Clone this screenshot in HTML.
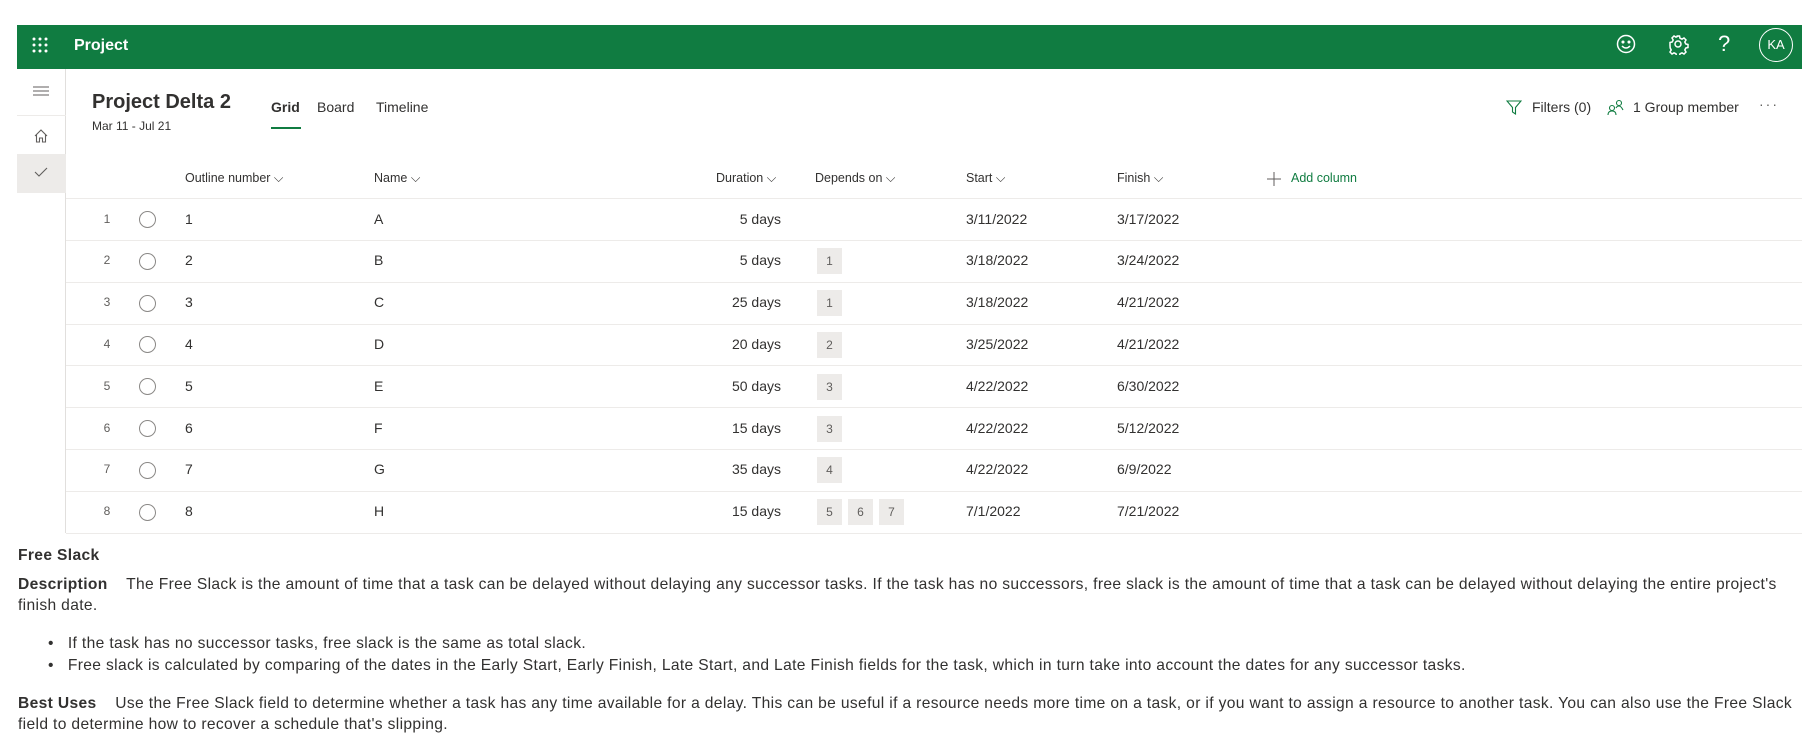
<!DOCTYPE html>
<html><head><meta charset="utf-8"><style>
*{margin:0;padding:0;box-sizing:border-box}
body{width:1809px;height:728px;overflow:hidden;background:#fff;font-family:"Liberation Sans",sans-serif;color:#323130;position:relative}
.a{position:absolute;white-space:nowrap}
.top{left:17px;top:25px;width:1785px;height:44px;background:#107c41}
.side{left:17px;top:69px;width:49px;height:464px;border-right:1px solid #e1dfdd}
.hd{font-size:12.5px;color:#323130;top:171px}
.cell{font-size:14px;color:#323130}
.rowline{left:66px;width:1736px;height:1px;background:#edebe9}
.badge{position:absolute;width:25px;height:26px;background:#edebe9;font-size:12px;color:#605e5c;text-align:center;line-height:26px}
.circ{position:absolute;width:17px;height:17px;border:1.3px solid #8a8886;border-radius:50%}
.txt{font-size:15.6px;color:#323130;left:18px;letter-spacing:0.35px}
</style></head><body>
<div class="a top"></div>
<svg class="a" style="left:32px;top:37px" width="16" height="16" viewBox="0 0 16 16" fill="#fff"><circle cx="2" cy="2" r="1.5"/><circle cx="8" cy="2" r="1.5"/><circle cx="14" cy="2" r="1.5"/><circle cx="2" cy="8" r="1.5"/><circle cx="8" cy="8" r="1.5"/><circle cx="14" cy="8" r="1.5"/><circle cx="2" cy="14" r="1.5"/><circle cx="8" cy="14" r="1.5"/><circle cx="14" cy="14" r="1.5"/></svg>
<div class="a" style="left:74px;top:37px;font-size:16px;font-weight:bold;color:#fff">Project</div>
<svg class="a" style="left:1615px;top:33px" width="22" height="22" viewBox="0 0 22 22" fill="none" stroke="#fff" stroke-width="1.5"><circle cx="11" cy="11" r="8.5"/><circle cx="8" cy="9" r=".8" fill="#fff"/><circle cx="14" cy="9" r=".8" fill="#fff"/><path d="M7 13q4 4 8 0"/></svg>
<svg class="a" style="left:1667px;top:33px" width="22" height="22" viewBox="0 0 22 22" fill="none" stroke="#fff" stroke-width="1.5"><circle cx="11" cy="11" r="3"/><path d="M9.5 3h3l.5 2.2 2 1 2-1.2 2 2-1.2 2 1 2 2.2.5v3l-2.2.5-1 2 1.2 2-2 2-2-1.2-2 1-.5 2.2h-3l-.5-2.2-2-1-2 1.2-2-2 1.2-2-1-2L3 12.5v-3l2.2-.5 1-2-1.2-2 2-2 2 1.2 2-1z"/></svg>
<div class="a" style="left:1718px;top:31px;font-size:22px;color:#fff">?</div>
<div class="a" style="left:1759px;top:28px;width:34px;height:34px;border:1.3px solid #fff;border-radius:50%;color:#fff;font-size:13px;text-align:center;line-height:32px">KA</div>

<div class="a side"></div>
<div class="a" style="left:17px;top:115px;width:49px;height:1px;background:#edebe9"></div>
<div class="a" style="left:17px;top:154px;width:49px;height:39px;background:#edebe9"></div>
<svg class="a" style="left:33px;top:85px" width="16" height="12" stroke="#605e5c" stroke-width="1.1"><path d="M0 2h16M0 6h16M0 10h16"/></svg>
<svg class="a" style="left:33px;top:128px" width="16" height="16" viewBox="0 0 16 16" fill="none" stroke="#605e5c" stroke-width="1.1"><path d="M2 8L8 2l6 6M3.5 6.5V14h3v-4h3v4h3V6.5"/></svg>
<svg class="a" style="left:34px;top:166px" width="14" height="12" viewBox="0 0 14 12" fill="none" stroke="#605e5c" stroke-width="1.1"><path d="M1 6l4 4 8-8"/></svg>

<div class="a" style="left:92px;top:91px;font-size:20px;font-weight:bold;color:#323130">Project Delta 2</div>
<div class="a" style="left:92px;top:119px;font-size:12px;color:#323130">Mar 11 - Jul 21</div>
<div class="a" style="left:271px;top:99px;font-size:14px;font-weight:bold">Grid</div>
<div class="a" style="left:317px;top:99px;font-size:14px">Board</div>
<div class="a" style="left:376px;top:99px;font-size:14px">Timeline</div>
<div class="a" style="left:271px;top:127px;width:30px;height:2px;background:#107c41"></div>

<svg class="a" style="left:1506px;top:100px" width="16" height="15" viewBox="0 0 16 15" fill="none" stroke="#107c41" stroke-width="1.1"><path d="M1 1h14L9.5 7.5V14L6.5 12V7.5z"/></svg>
<div class="a" style="left:1532px;top:99px;font-size:14px">Filters (0)</div>
<svg class="a" style="left:1607px;top:99px" width="17" height="16" viewBox="0 0 17 16" fill="none" stroke="#107c41" stroke-width="1.1"><circle cx="5" cy="9" r="2.5"/><path d="M1 16q0-4 4-4t4 4"/><circle cx="12" cy="4" r="2.5"/><path d="M9 9q1-2 3-2t4 4"/></svg>
<div class="a" style="left:1633px;top:99px;font-size:14px">1 Group member</div>
<div class="a" style="left:1759px;top:96px;font-size:14px;color:#605e5c;letter-spacing:2px">···</div>

<div class="a hd" style="left:185px">Outline number ⌵</div>
<div class="a hd" style="left:374px">Name ⌵</div>
<div class="a hd" style="left:716px">Duration ⌵</div>
<div class="a hd" style="left:815px">Depends on ⌵</div>
<div class="a hd" style="left:966px">Start ⌵</div>
<div class="a hd" style="left:1117px">Finish ⌵</div>
<svg class="a" style="left:1267px;top:172px" width="14" height="14" stroke="#605e5c" stroke-width="1"><path d="M7 0v14M0 7h14"/></svg>
<div class="a hd" style="left:1291px;color:#107c41">Add column</div>
<div class="a rowline" style="top:198px"></div>

<div id="rows"></div>
<script>
var d=[["A","5 days",[],"3/11/2022","3/17/2022"],["B","5 days",[1],"3/18/2022","3/24/2022"],["C","25 days",[1],"3/18/2022","4/21/2022"],["D","20 days",[2],"3/25/2022","4/21/2022"],["E","50 days",[3],"4/22/2022","6/30/2022"],["F","15 days",[3],"4/22/2022","5/12/2022"],["G","35 days",[4],"4/22/2022","6/9/2022"],["H","15 days",[5,6,7],"7/1/2022","7/21/2022"]];
var h="";
for(var i=0;i<8;i++){var y=199+i*41.8,c=y+20.5,r=d[i];
h+='<div class="a cell" style="left:101px;top:'+(c-8)+'px;font-size:12px;width:12px;text-align:center;color:#605e5c">'+(i+1)+'</div>';
h+='<div class="circ" style="left:139px;top:'+(c-8.5)+'px"></div>';
h+='<div class="a cell" style="left:185px;top:'+(c-9)+'px">'+(i+1)+'</div>';
h+='<div class="a cell" style="left:374px;top:'+(c-9)+'px">'+r[0]+'</div>';
h+='<div class="a cell" style="left:681px;width:100px;text-align:right;top:'+(c-9)+'px">'+r[1]+'</div>';
for(var j=0;j<r[2].length;j++)h+='<div class="badge" style="left:'+(817+j*31)+'px;top:'+(c-13)+'px">'+r[2][j]+'</div>';
h+='<div class="a cell" style="left:966px;top:'+(c-9)+'px">'+r[3]+'</div>';
h+='<div class="a cell" style="left:1117px;top:'+(c-9)+'px">'+r[4]+'</div>';
h+='<div class="a rowline" style="top:'+(y+41)+'px"></div>';}
document.getElementById("rows").innerHTML=h;
</script>

<div class="a txt" style="top:547px;font-weight:bold">Free Slack</div>
<div class="a txt" style="top:576px"><b>Description</b>&nbsp;&nbsp;&nbsp; The Free Slack is the amount of time that a task can be delayed without delaying any successor tasks. If the task has no successors, free slack is the amount of time that a task can be delayed without delaying the entire project's</div>
<div class="a txt" style="top:597px">finish date.</div>
<div class="a txt" style="top:635px;left:48px">•&nbsp;&nbsp; If the task has no successor tasks, free slack is the same as total slack.</div>
<div class="a txt" style="top:657px;left:48px">•&nbsp;&nbsp; Free slack is calculated by comparing of the dates in the Early Start, Early Finish, Late Start, and Late Finish fields for the task, which in turn take into account the dates for any successor tasks.</div>
<div class="a txt" style="top:695px"><b>Best Uses</b>&nbsp;&nbsp;&nbsp; Use the Free Slack field to determine whether a task has any time available for a delay. This can be useful if a resource needs more time on a task, or if you want to assign a resource to another task. You can also use the Free Slack</div>
<div class="a txt" style="top:716px">field to determine how to recover a schedule that's slipping.</div>
</body></html>
